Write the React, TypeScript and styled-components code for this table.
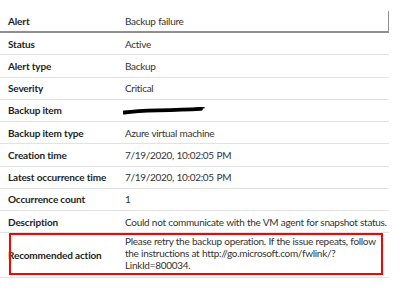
import React from "react";
import styled, { createGlobalStyle } from "styled-components";

const GlobalStyle = createGlobalStyle`
  html, body {
    margin: 0;
    padding: 0;
    background: #ffffff;
  }
  body {
    font-family: Lato, "Open Sans", sans-serif;
    font-size: 10px;
    color: #333;
  }
`;

const Page = styled.div`
  width: 400px;
  height: 290px;
  padding-top: 11px;
  box-sizing: border-box;
  overflow: hidden;
`;

const Table = styled.div`
  width: 389px;
`;

const Row = styled.div<{ $head?: boolean; $tall?: boolean }>`
  position: relative;
  display: grid;
  grid-template-columns: 125px 1fr;
  height: ${(p) => (p.$head ? "20px" : p.$tall ? "44px" : "21.25px")};
  border-bottom: ${(p) => (p.$head ? "2px solid #8f8f8f" : "1px solid #e2e2e2")};
  border-right: ${(p) => (p.$head ? "1px solid #8f8f8f" : "none")};
`;

const Label = styled.div`
  display: flex;
  align-items: center;
  padding-left: 8px;
  font-weight: 700;
  letter-spacing: -0.15px;
  color: #1e1e1e;
  white-space: nowrap;
`;

const Value = styled.div<{ $top?: boolean }>`
  display: flex;
  flex-direction: column;
  justify-content: ${(p) => (p.$top ? "flex-start" : "center")};
  padding-top: ${(p) => (p.$top ? "2px" : "0")};
  line-height: 12px;
  letter-spacing: -0.3px;
  word-spacing: 0.3px;
  color: #333;
  white-space: nowrap;
`;

const Highlight = styled.div`
  position: absolute;
  left: 9px;
  right: 6px;
  top: 0;
  bottom: 2px;
  border: 2px solid #ff0000;
  pointer-events: none;
`;

const Redacted = () => (
  <svg width="82" height="10" viewBox="0 0 82 10" style={{ marginLeft: -2 }}>
    <path
      d="M1 7.5 C 10 6.2, 20 5.6, 35 5.3 C 50 5, 64 4.6, 78 3.8"
      stroke="#000"
      strokeWidth="3.8"
      strokeLinecap="round"
      fill="none"
    />
    <path d="M72 3.4 L81 2.8" stroke="#000" strokeWidth="1.4" strokeLinecap="round" />
  </svg>
);

const rows: [string, React.ReactNode][] = [
  ["Status", "Active"],
  ["Alert type", "Backup"],
  ["Severity", "Critical"],
  ["Backup item", <Redacted key="r" />],
  ["Backup item type", "Azure virtual machine"],
  ["Creation time", "7/19/2020, 10:02:05 PM"],
  ["Latest occurrence time", "7/19/2020, 10:02:05 PM"],
  ["Occurrence count", "1"],
  ["Description", "Could not communicate with the VM agent for snapshot status."],
];

const actionLines = [
  "Please retry the backup operation. If the issue repeats, follow",
  "the instructions at http://go.microsoft.com/fwlink/?",
  "LinkId=800034.",
];

export default function App() {
  return (
    <Page>
      <GlobalStyle />
      <Table>
        <Row $head>
          <Label>Alert</Label>
          <Value>Backup failure</Value>
        </Row>
        {rows.map(([label, value]) => (
          <Row key={label}>
            <Label>{label}</Label>
            <Value>{value}</Value>
          </Row>
        ))}
        <Row $tall>
          <Label>Recommended action</Label>
          <Value $top>
            {actionLines.map((line) => (
              <span key={line}>{line}</span>
            ))}
          </Value>
          <Highlight />
        </Row>
      </Table>
    </Page>
  );
}
